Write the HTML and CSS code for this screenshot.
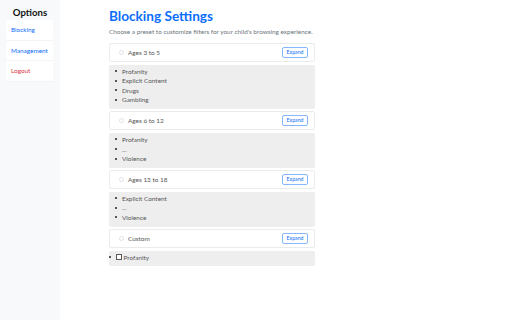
FILE: index.html
```html
<!DOCTYPE html>
<html>
<head>
	<meta charset="utf-8">
	<title>Blocking Settings</title>
	<link rel="stylesheet" href="styles.css">
</head>
<body>
<div class="page">
	<div class="sidebar">
		<h4>Options</h4>
		<div class="nav">
			<a href="#">Blocking</a>
			<a href="#">Management</a>
			<a href="#" class="logout">Logout</a>
		</div>
	</div>

	<div class="main">
		<h2>Blocking Settings</h2>
		<p class="lead">Choose a preset to customize filters for your child's browsing experience.</p>

		<div class="preset">
			<span class="radio"></span><label>Ages 3 to 5</label>
			<button>Expand</button>
		</div>
		<ul class="filters">
			<li>Profanity</li>
			<li>Explicit Content</li>
			<li>Drugs</li>
			<li>Gambling</li>
		</ul>

		<div class="preset">
			<span class="radio"></span><label>Ages 6 to 12</label>
			<button>Expand</button>
		</div>
		<ul class="filters">
			<li>Profanity</li>
			<li>...</li>
			<li>Violence</li>
		</ul>

		<div class="preset">
			<span class="radio"></span><label>Ages 13 to 18</label>
			<button>Expand</button>
		</div>
		<ul class="filters">
			<li>Explicit Content</li>
			<li>...</li>
			<li>Violence</li>
		</ul>

		<div class="preset">
			<span class="radio"></span><label>Custom</label>
			<button>Expand</button>
		</div>
		<ul class="filters custom">
			<li><span class="check"></span>Profanity</li>
		</ul>
	</div>
</div>
</body>
</html>
```

FILE: styles.css
```css
body {margin: 0; font-family: Lato, sans-serif; font-size: 6.4px; color: #212529;}
.page {display: flex; min-height: 320px;}

.sidebar {width: 60px; background: #f8f9fa; padding-top: 7px;}
.sidebar h4 {margin: 0 0 1px; font-size: 9.6px; line-height: 12px; text-align: center; font-weight: 700; color: #111;}
.nav {display: flex; flex-direction: column; margin: 0 7px 0 6px;}
.nav a {display: block; background: #fff; color: #0d6efd; text-decoration: none; line-height: 9.6px; padding: 5px 5px; border-bottom: 1px solid #f1f3f5; border-radius: 2px;}
.nav a.logout {color: #dc3545;}

.main {width: 206px; padding: 9px 0 0 49px;}
.main h2 {margin: 0; font-size: 13.6px; line-height: 15px; font-weight: 700; color: #0d6efd;}
.lead {margin: 3px 0 6px; line-height: 9.6px; color: #6c757d;}

.preset {display: flex; align-items: center; height: 17px; padding: 0 6px 0 9px; border: 1px solid #e9ecef; border-radius: 2px; margin-bottom: 3px; background: #fff;}
.radio {width: 5px; height: 5px; border: 1px solid #dee2e6; border-radius: 50%; margin-right: 4px; box-sizing: border-box;}
.preset label {flex: 1; color: #555;}
.preset button {font-family: inherit; font-size: 5.2px; line-height: 9px; height: 11px; width: 26px; padding: 0; background: #fff; color: #0d6efd; border: 1px solid #86b7fe; border-radius: 2px;}

.filters {list-style: none; margin: 0 0 2px; padding: 2px 0 4px 13px; background: #eee; border-radius: 2px; line-height: 9.6px; color: #555;}
.filters li {height: 9.6px; overflow: visible;}
.filters li::before {content: ""; display: inline-block; width: 2px; height: 2px; border-radius: 50%; background: #222; margin: 0 5px 0 -7px; vertical-align: 1.5px;}
.filters.custom {padding-left: 7px;}
.check {display: inline-block; width: 4px; height: 4px; border: 0.6px solid #555; border-radius: 0.5px; margin-right: 1.5px; vertical-align: -0.5px; background: #fff;}
```
